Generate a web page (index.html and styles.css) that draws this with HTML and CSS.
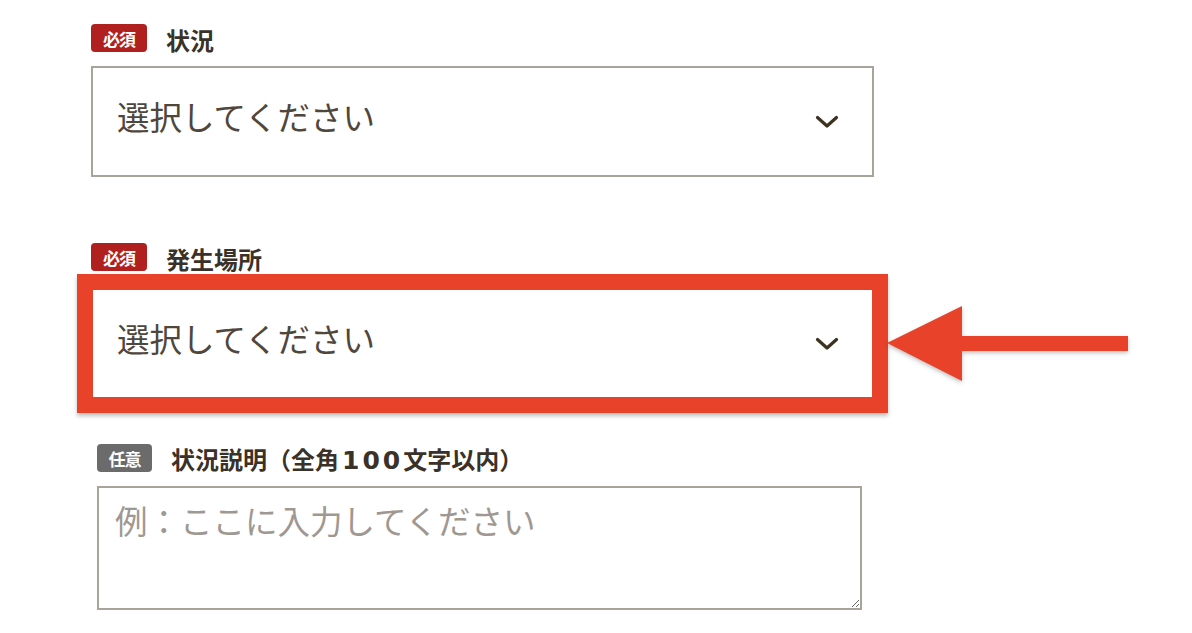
FILE: index.html
```html
<!DOCTYPE html>
<html lang="ja">
<head>
<meta charset="utf-8">
<title>フォーム</title>
<link rel="stylesheet" href="styles.css">
</head>
<body>
<form class="form">
  <div class="field field-status">
    <div class="label-row">
      <span class="badge badge-required">必須</span>
      <span class="label-text">状況</span>
    </div>
    <div class="select">
      <span class="select-text">選択してください</span>
      <svg class="chevron" width="24" height="14" viewBox="0 0 24 14"><path d="M2.5 2.5 L12 11 L21.5 2.5" fill="none" stroke="#3d3120" stroke-width="3.2" stroke-linecap="round" stroke-linejoin="round"/></svg>
    </div>
  </div>

  <div class="field field-place">
    <div class="label-row">
      <span class="badge badge-required">必須</span>
      <span class="label-text">発生場所</span>
    </div>
    <div class="highlight-row">
      <div class="highlight">
        <div class="select select-inner">
          <span class="select-text">選択してください</span>
          <svg class="chevron" width="24" height="14" viewBox="0 0 24 14"><path d="M2.5 2.5 L12 11 L21.5 2.5" fill="none" stroke="#3d3120" stroke-width="3.2" stroke-linecap="round" stroke-linejoin="round"/></svg>
        </div>
      </div>
      <svg class="arrow" width="242" height="76" viewBox="0 0 242 76"><polygon points="0,37 75,0 75,75" fill="#e8432a"/><rect x="70" y="30" width="171" height="15" fill="#e8432a"/></svg>
    </div>
  </div>

  <div class="field field-desc">
    <div class="label-row">
      <span class="badge badge-optional">任意</span>
      <span class="label-text">状況説明（全角<span class="num">100</span>文字以内）</span>
    </div>
    <textarea class="textarea" placeholder="例：ここに入力してください"></textarea>
  </div>
</form>
</body>
</html>
```

FILE: styles.css
```css
html, body {
  margin: 0;
  padding: 0;
  background: #ffffff;
}

body {
  font-family: "Noto Sans CJK JP", "Noto Sans", sans-serif;
  color: #3a3128;
}

.form {
  padding: 24px 0 0 91px;
}

.label-row {
  display: flex;
  align-items: center;
  gap: 19px;
  height: 28px;
}

.badge {
  display: flex;
  align-items: center;
  justify-content: center;
  width: 56px;
  height: 28px;
  border-radius: 4px;
  color: #ffffff;
  font-size: 17px;
  font-weight: 700;
  line-height: 1;
  letter-spacing: -1px;
}

.badge-required {
  background: #b0201e;
}

.badge-optional {
  background: #6b6b6b;
  width: 55px;
}

.label-text {
  font-size: 24px;
  font-weight: 700;
  color: #3a3128;
  line-height: 1;
  padding-top: 3px;
}

.num {
  font-family: "DejaVu Sans", "Noto Sans", sans-serif;
  font-size: 25px;
  letter-spacing: 3px;
  margin-left: 3px;
}

.select {
  box-sizing: border-box;
  display: flex;
  align-items: center;
  justify-content: space-between;
  width: 783px;
  height: 111px;
  margin-top: 14px;
  padding: 0 33px 0 24px;
  border: 2px solid #a8a39b;
  background: #ffffff;
}

.select-text {
  font-size: 32.5px;
  color: #4f463c;
  line-height: 1;
  padding-bottom: 11px;
}

.chevron {
  display: block;
}

.field-place {
  margin-top: 66px;
}

.highlight-row {
  display: flex;
  align-items: center;
  margin-top: 3px;
  margin-left: -14px;
}

.highlight {
  width: 779px;
  border: 16px solid #e8432a;
  box-shadow: 0 3px 4px rgba(0, 0, 0, 0.25);
}

.select-inner {
  width: 779px;
  height: 107px;
  margin-top: 0;
  border: none;
  padding: 0 33px 0 24px;
}

.arrow {
  display: block;
  margin-left: -1px;
  filter: drop-shadow(0 2px 2px rgba(0, 0, 0, 0.25));
}

.field-desc {
  margin-top: 31px;
  margin-left: 6px;
}

.textarea {
  box-sizing: border-box;
  display: block;
  width: 765px;
  height: 124px;
  margin-top: 14px;
  padding: 12px 16px;
  border: 2px solid #a8a39b;
  border-radius: 0;
  font-family: "Noto Sans CJK JP", "Noto Sans", sans-serif;
  font-size: 32.5px;
  line-height: 1.2;
  color: #4f463c;
  background: #ffffff;
  resize: vertical;
  outline: none;
}

.textarea::placeholder {
  color: #9f9892;
}
```
